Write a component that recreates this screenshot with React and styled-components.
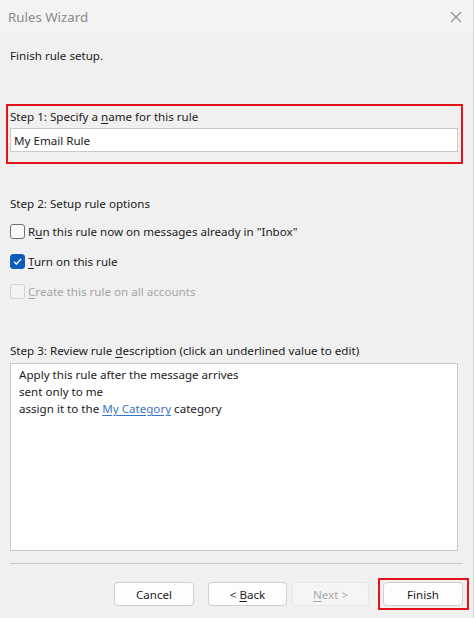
import React, { useState } from "react";
import styled, { createGlobalStyle } from "styled-components";

const GlobalStyle = createGlobalStyle`
  html, body {
    margin: 0;
    padding: 0;
    background: #f0f0f0;
  }
  body {
    font-family: "Noto Sans", "Open Sans", sans-serif;
    font-size: 11.6px;
    color: #1b1b1b;
  }
`

const App = () => {
    const [runNow, setRunNow] = useState(false)
    const [turnOn, setTurnOn] = useState(true)

    return (
        <>
            <GlobalStyle />
            <Window>
                <TitleBar>
                    <span>Rules Wizard</span>
                    <CloseButton aria-label="Close">
                        <svg width="12" height="12" viewBox="0 0 12 12">
                            <path d="M1 1 L11 11 M11 1 L1 11" stroke="#8e8e8e" strokeWidth="1.1" fill="none" />
                        </svg>
                    </CloseButton>
                </TitleBar>
                <Body>
                    <Intro>Finish rule setup.</Intro>

                    <Highlight>
                        <Label>Step 1: Specify a <u>n</u>ame for this rule</Label>
                        <NameInput defaultValue="My Email Rule" />
                    </Highlight>

                    <Section>
                        <Label>Step 2: Setup rule options</Label>
                        <Options>
                            <Option>
                                <Box checked={runNow} onClick={() => setRunNow(!runNow)} />
                                <span>R<u>u</u>n this rule now on messages already in "Inbox"</span>
                            </Option>
                            <Option>
                                <Box checked={turnOn} onClick={() => setTurnOn(!turnOn)}>
                                    {turnOn && (
                                        <svg width="11" height="11" viewBox="0 0 11 11">
                                            <path d="M2 5.8 L4.4 8 L9 3" stroke="#fff" strokeWidth="1.3" fill="none" />
                                        </svg>
                                    )}
                                </Box>
                                <span><u>T</u>urn on this rule</span>
                            </Option>
                            <Option disabled>
                                <Box disabled />
                                <span><u>C</u>reate this rule on all accounts</span>
                            </Option>
                        </Options>
                    </Section>

                    <Section $top={43}>
                        <Label>Step 3: Review rule <u>d</u>escription (click an underlined value to edit)</Label>
                        <Description>
                            <div>Apply this rule after the message arrives</div>
                            <div>sent only to me</div>
                            <div>assign it to the <ValueLink>My Category</ValueLink> category</div>
                        </Description>
                    </Section>

                    <Separator />

                    <Buttons>
                        <Button>Cancel</Button>
                        <Button $gap={14} $width={79}>&lt; <u>B</u>ack</Button>
                        <Button $gap={5} $width={77} disabled><u>N</u>ext &gt;</Button>
                        <FinishFrame>
                            <Button>Finish</Button>
                        </FinishFrame>
                    </Buttons>
                </Body>
            </Window>
        </>
    )
}

const Window = styled.div`
  width: 474px;
  height: 618px;
  box-sizing: border-box;
  border-right: 1px solid #d6d6d6;
  background: #f0f0f0;
  display: flex;
  flex-direction: column;
  overflow: hidden;
`

const TitleBar = styled.div`
  height: 33px;
  flex-shrink: 0;
  display: flex;
  align-items: center;
  justify-content: space-between;
  padding: 0 10px 0 8px;
  background: #f3f3f3;
  color: #8a8a8a;
  font-size: 13.3px;
`

const CloseButton = styled.button`
  border: none;
  background: none;
  padding: 0;
  width: 14px;
  height: 14px;
  display: flex;
  align-items: center;
  justify-content: center;
`

const Body = styled.div`
  display: flex;
  flex-direction: column;
  padding: 0 10px;
`

const Intro = styled.div`
  margin-top: 14px;
  line-height: 17px;
`

const Highlight = styled.div`
  margin: 40px 0 0 -4px;
  width: 457px;
  height: 60px;
  box-sizing: border-box;
  border: 2px solid #e3141c;
  padding: 2px 4px 0 2px;
  display: flex;
  flex-direction: column;
  gap: 3px;
`

const Label = styled.div`
  line-height: 17px;

  u {
    text-decoration-thickness: 1px;
    text-underline-offset: 2px;
  }
`

const NameInput = styled.input`
  height: 24px;
  width: 448px;
  box-sizing: border-box;
  border: 1px solid #c9c9c9;
  background: #fff;
  font: inherit;
  color: #1b1b1b;
  padding: 0 3px;
  outline: none;
`

const Section = styled.div`
  margin-top: ${p => p.$top || 31}px;
  display: flex;
  flex-direction: column;
`

const Options = styled.div`
  display: flex;
  flex-direction: column;
  gap: 15px;
  margin-top: 12px;
`

const Option = styled.label`
  display: flex;
  align-items: center;
  gap: 3px;
  height: 15px;
  color: ${p => p.disabled ? "#a5a5a5" : "#1b1b1b"};

  u {
    text-decoration-thickness: 1px;
    text-underline-offset: 2px;
  }
`

const Box = styled.span`
  width: 15px;
  height: 15px;
  box-sizing: border-box;
  border-radius: 3px;
  flex-shrink: 0;
  display: flex;
  align-items: center;
  justify-content: center;
  border: 1px solid ${p => p.checked ? "#0f5bbd" : p.disabled ? "#d2d2d2" : "#707070"};
  background: ${p => p.checked ? "#0f5bbd" : p.disabled ? "#f4f4f4" : "#fafafa"};
`

const Description = styled.div`
  margin-top: 4px;
  width: 448px;
  height: 188px;
  box-sizing: border-box;
  border: 1px solid #c9c9c9;
  background: #fff;
  padding: 2px 8px;
  line-height: 17px;
`

const ValueLink = styled.span`
  color: #3a75c4;
  text-decoration: underline;
  text-underline-offset: 2px;
`

const Separator = styled.hr`
  margin: 12px 0 0 0;
  width: 453px;
  border: none;
  border-top: 1px solid #c8c8c8;
  height: 0;
`

const Buttons = styled.div`
  margin: 14px -6px 0 0;
  display: flex;
  justify-content: flex-end;
  align-items: center;
`

const Button = styled.button`
  margin-left: ${p => p.$gap || 0}px;
  width: ${p => p.$width || 80}px;
  height: 24px;
  box-sizing: border-box;
  border: 1px solid ${p => p.disabled ? "#e6e6e6" : "#d0d0d0"};
  border-radius: 4px;
  background: ${p => p.disabled ? "#f5f5f5" : "#fdfdfd"};
  color: ${p => p.disabled ? "#a8a8a8" : "#1b1b1b"};
  font: inherit;
  padding: 0;

  u {
    text-decoration-thickness: 1px;
    text-underline-offset: 2px;
  }
`

const FinishFrame = styled.div`
  margin-left: 9px;
  border: 2px solid #e3141c;
  padding: 2px 4px 2px 3px;
  display: flex;
`

export default App
